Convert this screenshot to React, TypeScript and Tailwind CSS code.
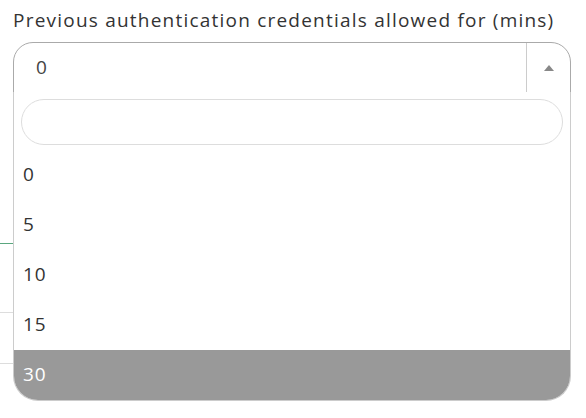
const options = ["0", "5", "10", "15", "30"];

const App = () => {
    const selected = "30";

    return (
        <div
            className="relative w-[586px] h-[418px] bg-white text-[#333] overflow-hidden"
            style={{ fontFamily: '"Open Sans", sans-serif' }}
        >
            {/* Label */}
            <p className="pl-[13px] pt-[6px] h-[42px] text-[19px] leading-[28px] tracking-[0.064em] text-[#333]">
                Previous authentication credentials allowed for (mins)
            </p>

            {/* Select box */}
            <div className="ml-[13px] w-[558px] h-[51px] flex border border-[#aaa] rounded-t-[20px] bg-white">
                <span className="flex-1 pl-[22px] flex items-center text-[19px] tracking-[0.05em] text-[#444]">
                    0
                </span>
                <span className="w-[44px] flex items-center justify-center border-l border-[#ccc]">
                    <span className="w-0 h-0 border-x-[5px] border-x-transparent border-b-[6px] border-b-[#888]" />
                </span>
            </div>

            {/* Content behind the open menu */}
            <div className="pt-[150px] w-[13px]">
                <div className="h-px bg-[#5aa77f]" />
                <div className="h-[68px]" />
                <div className="h-px bg-[#ddd]" />
                <div className="h-[50px]" />
                <div className="h-px bg-[#ddd]" />
            </div>

            {/* Dropdown */}
            <div className="absolute left-[13px] top-[92px] w-[558px] bg-white border-x border-b border-[#ccc] rounded-b-[25px] overflow-hidden">
                <div className="p-[7px] pb-[5px]">
                    <div className="h-[46px] rounded-full border border-[#ddd]" />
                </div>
                <ul>
                    {options.map((o) => (
                        <li
                            key={o}
                            className={`h-[50px] flex items-center pl-[9px] pb-[2px] text-[19px] tracking-[0.05em] ${
                                o === selected ? "bg-[#999] text-white" : "text-[#333]"
                            }`}
                        >
                            {o}
                        </li>
                    ))}
                </ul>
            </div>
        </div>
    );
};

export default App;
